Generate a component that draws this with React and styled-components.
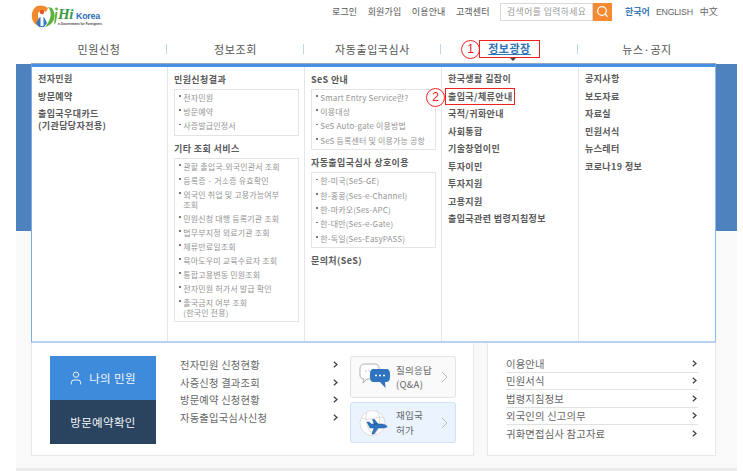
import React from "react";
import styled, { createGlobalStyle } from "styled-components";
import { Search, User } from "lucide-react";

const Global = createGlobalStyle`
  html, body { margin: 0; padding: 0; background: #fff; }
  body { font-family: "Noto Sans CJK KR", "Noto Sans", sans-serif; color: #555; width: 743px; height: 471px; overflow: hidden; }
  * { box-sizing: border-box; }
`;

const Page = styled.div`width: 743px; height: 471px; display: flex; flex-direction: column;`;

const TopBar = styled.header`height: 37px; display: flex; align-items: flex-start; padding-left: 31px;`;
const LogoWrap = styled.div`display: flex; width: 301px; padding-top: 5px; align-items: flex-start;`;
const LogoText = styled.div`display: flex; flex-direction: column; margin-left: -2px; line-height: 1;`;
const LogoTop = styled.div`display: flex; align-items: baseline; height: 18px; padding-top: 1px;`;
const Hi = styled.span`font-family: "Liberation Serif", serif; font-style: italic; font-weight: 700; font-size: 15px; color: #3d9a4a; line-height: 17px; width: 18px; letter-spacing: -0.5px;`;
const Korea = styled.span`font-family: "Liberation Sans", sans-serif; font-weight: 700; font-size: 8.8px; color: #2a6cb5; letter-spacing: -0.2px;`;
const LogoSub = styled.span`font-family: "Liberation Sans", sans-serif; font-size: 3.2px; font-weight: 700; color: #444; white-space: nowrap;`;

const Utility = styled.nav`display: flex; align-items: center; height: 22px; padding-top: 1px;`;
const UtilLink = styled.a`font-size: 9px; color: #555; letter-spacing: 0.15px; margin-right: 10.4px; white-space: nowrap; line-height: 14px;`;
const SearchBox = styled.div`display: flex; height: 18px; width: 112px; margin-right: 13px;`;
const SearchField = styled.div`flex: 1; border: 1px solid #d8d8d8; font-size: 8.8px; color: #999; letter-spacing: 0.45px; line-height: 15px; padding-left: 6px; white-space: nowrap; overflow: hidden;`;
const SearchBtn = styled.div`width: 19px; background: #f58a33; color: #fff; display: flex; align-items: center; justify-content: center;`;
const LangLink = styled.a`font-size: ${p => p.$latin ? "8.8px" : "9px"}; letter-spacing: ${p => p.$latin ? "-0.25px" : "0"}; color: ${p => p.$on ? "#3a7ab8" : "#666"}; font-weight: ${p => p.$on ? 700 : 400}; margin-right: ${p => p.$gap}px; white-space: nowrap; line-height: 14px; font-family: ${p => p.$latin ? '"Liberation Sans", sans-serif' : 'inherit'};`;

const MainNav = styled.nav`height: 27px; margin-left: 31px; width: 685px; display: grid; grid-template-columns: 136px 137px 137px 137px 138px; padding-bottom: 4px;`;
const NavItem = styled.div`position: relative; display: flex; align-items: center; justify-content: center; font-size: 11px; letter-spacing: 0.6px; color: #555; &:not(:last-child)::after { content: ""; position: absolute; right: 0; top: 7px; height: 10px; width: 1px; background: #bcd6e4; }`;
const NavActive = styled.span`position: relative; font-weight: 700; color: #2f74b5; text-decoration: underline; border: 1px solid #ee2222; height: 18px; width: 61px; text-align: center; line-height: 15px; letter-spacing: 0.5px;`;
const Caret = styled.i`position: absolute; left: 30px; bottom: -4px; width: 0; height: 0; border: 3px solid transparent; border-top: 3px solid #444; border-bottom: 0;`;
const NumberMark = styled.span`position: absolute; width: 19px; height: 19px; border: 1px solid #ee2222; border-radius: 50%; color: #e22; font-size: 12px; line-height: 17px; text-align: center; font-weight: 400; letter-spacing: 0; background: #fff; font-family: "Liberation Sans", sans-serif; left: ${p => p.$left}px; top: ${p => p.$top}px;`;

const Stage = styled.main`margin-left: 16px; width: 721px; height: 404px; padding: 0 21px 0 15px; background: linear-gradient(#4d82bf 0 167px, #f9f9f9 167px);`;
const Panel = styled.section`height: 279px; background: #fff; border-top: 3px solid #4a90e2; border-left: 1px solid #7fabe0; border-right: 1px solid #8fb8ea; border-bottom: 2px solid #b9d0ee; display: grid; grid-template-columns: 136px 137px 137px 137px 136px; box-shadow: 0 -1px 0 #8fa6bf;`;
const Column = styled.div`padding: 3.5px 5px 0 6px; &:not(:last-child) { border-right: 1px solid #e6e6e6; }`;
const Head = styled.div`font-size: 9px; font-weight: 700; color: #5a5a5a; line-height: 18px; height: 18px; white-space: nowrap; letter-spacing: 0.4px; margin-top: ${p => p.$top || 0}px;`;
const TopLink = styled.a`position: relative; display: block; font-size: 9px; font-weight: 700; color: #5a5a5a; line-height: 12px; padding: 2.75px 0; letter-spacing: 0.4px; white-space: nowrap;`;
const RedMark = styled.span`position: absolute; left: -3px; top: 0; width: 70px; height: 17px; border: 1px solid #ee2222;`;
const SubBox = styled.ul`list-style: none; margin: 0; padding: 1px 4px; border: 1px solid #e4e4e4; width: 125px;`;
const SubItem = styled.li`display: flex; font-size: 8px; color: #949494; line-height: 10.2px; padding: ${p => p.$tight ? 1.9 : 2.1}px 0; letter-spacing: 0.15px; white-space: nowrap; &::before { content: ""; width: 1.5px; height: 1.5px; margin: 2.5px 2.8px 0 0; flex: none; background: #777; }`;

const Bottom = styled.div`display: flex; gap: 13px; align-items: stretch; height: 113px;`;
const BoxLeft = styled.section`width: 443px; background: #fff; border: 1px solid #e8e8e8; border-top: 0; padding: 13px 0 0 18px; display: flex;`;
const TileStack = styled.div`width: 106px; display: flex; flex-direction: column;`;
const Tile = styled.a`height: 44px; background: ${p => p.$dark ? "#2a435f" : "#3f8bdb"}; color: #f2f6fb; font-size: 11.5px; letter-spacing: 0.35px; display: flex; align-items: center; justify-content: center; gap: 5px; padding-right: ${p => p.$dark ? 0 : 2}px;`;
const CheckList = styled.ul`list-style: none; margin: 0 9px 0 24px; padding: 0; width: 161px;`;
const CheckRow = styled.li`display: flex; justify-content: space-between; align-items: center; height: 17.5px; font-size: 10.3px; color: #666; letter-spacing: 0.2px; padding-right: 3px;`;
const CardStack = styled.div`width: 106px; display: flex; flex-direction: column; gap: 4px;`;
const Card = styled.a`height: ${p => p.$h}px; border: 1px solid ${p => p.$blue ? "#cfe2f7" : "#e3e3e3"}; background: ${p => p.$blue ? "#eaf3fe" : "#fafafa"}; border-radius: 3px; display: flex; align-items: center; padding-left: 8px;`;
const CardLabel = styled.div`width: 45px; margin-left: 4px; font-size: 9.5px; line-height: 14.5px; color: #666; letter-spacing: 0.3px; white-space: nowrap;`;
const BoxRight = styled.aside`width: 229px; background: #fff; border: 1px solid #e8e8e8; border-top: 0; padding: 12px 0 0 18px;`;
const InfoRow = styled.li`display: flex; justify-content: space-between; align-items: center; height: 17.5px; font-size: 10.3px; color: #666; letter-spacing: 0.2px; padding-right: 1px; &:not(:last-child) { border-bottom: 1px solid #e2e2e2; }`;
const InfoList = styled.ul`list-style: none; margin: 0; padding: 0; width: 192px;`;
const Strip = styled.div`margin-left: 16px; width: 721px; flex: 1; background: #ebebeb;`;

const Chevron = () => (
  <svg width="5" height="7" viewBox="0 0 5 7"><path d="M0.8 0.7 L4 3.5 L0.8 6.3" fill="none" stroke="#444" strokeWidth="1.3" /></svg>
);
const CardChevron = () => (
  <svg width="7" height="12" viewBox="0 0 7 12"><path d="M1 1 L6 6 L1 11" fill="none" stroke="#bbb" strokeWidth="1" /></svg>
);

const LogoMark = () => (
  <svg width="29" height="23" viewBox="0 0 29 23">
    <path d="M6 1 C1 4 0 10 1.5 15 C2.5 18 5 20 7 21 L10 18 L7 12 L7 8 L11 5 L15 7 L17 3 C13 0 9 0 6 1Z" fill="#f08a2c" />
    <circle cx="11" cy="7" r="2.2" fill="#e8532b" />
    <path d="M5 18 L9 12 L13 12 L16 18 L13 22 L8 22Z" fill="#3478c4" />
    <path d="M9.5 11 L12.5 11 L12.5 21 L9.5 21Z" fill="#fff" />
    <path d="M17 2 C21 6 21 14 14 22 C22 20 27 12 21 3Z" fill="#5db13f" />
    <circle cx="25.5" cy="4" r="1.4" fill="#5db13f" />
    <path d="M24.5 7 L26.5 7 L25 17 L23 20Z" fill="#5db13f" />
  </svg>
);

const ChatIcon = () => (
  <svg width="33" height="28" viewBox="0 0 33 28">
    <path d="M5 1 H16 C19 1 20 3 20 5 V12 C20 15 18 16 16 16 H8 L4 20 L5 16 C2 16 1 14 1 12 V5 C1 3 3 1 5 1Z" fill="#fff" stroke="#aaa" strokeWidth="0.9" />
    <circle cx="7" cy="8" r="0.7" fill="#bbb" /><circle cx="10" cy="8" r="0.7" fill="#bbb" />
    <path d="M15 6 H27 C30 6 31 8 31 11 V14 C31 18 29 19 27 19 H26 L26.5 25 L21 19 H15 C12 19 11 17 11 14 V11 C11 8 12 6 15 6Z" fill="#2f74c0" />
    <circle cx="17" cy="12.5" r="1" fill="#fff" /><circle cx="21" cy="12.5" r="1" fill="#fff" /><circle cx="25" cy="12.5" r="1" fill="#fff" />
  </svg>
);

const PlaneIcon = () => (
  <svg width="33" height="28" viewBox="0 0 33 28">
    <circle cx="13.5" cy="14" r="12.5" fill="#fff" stroke="#ddd" strokeWidth="1" />
    <path d="M3 9 C10 12 17 8 24 8 M8 3 C5 12 9 20 14 26 M19 3 C23 11 19 20 16 26" fill="none" stroke="#ddd" strokeWidth="1" />
    <path d="M8 13 L10 13 L12.5 15 H22 C25 15 28 16.5 28 17.5 C28 18.5 25 19 22 19 H19 L15 25 H13 L15 19 H11 L8 13Z M15 15 L13.5 10.5 H15.5 L19 15Z" fill="#2f74c0" stroke="#1d4e86" strokeWidth="0.5" />
  </svg>
);

const Items = ({ list, tight }) => list.map(t => (
  <SubItem key={t} $tight={tight}>
    <span>{t.split("\n").map((l, i) => <React.Fragment key={i}>{i > 0 && <br />}{l}</React.Fragment>)}</span>
  </SubItem>
));

export default function App() {
  return (
    <Page>
      <Global />
      <TopBar>
        <LogoWrap>
          <LogoMark />
          <LogoText>
            <LogoTop><Hi>Hi</Hi><Korea>Korea</Korea></LogoTop>
            <LogoSub>e-Government for Foreigners</LogoSub>
          </LogoText>
        </LogoWrap>
        <Utility>
          <UtilLink>로그인</UtilLink>
          <UtilLink>회원가입</UtilLink>
          <UtilLink>이용안내</UtilLink>
          <UtilLink>고객센터</UtilLink>
          <SearchBox>
            <SearchField>검색어를 입력하세요</SearchField>
            <SearchBtn><Search size={13} strokeWidth={2.2} /></SearchBtn>
          </SearchBox>
          <LangLink $on $gap={6}>한국어</LangLink>
          <LangLink $latin $gap={7}>ENGLISH</LangLink>
          <LangLink $gap={0}>中文</LangLink>
        </Utility>
      </TopBar>
      <MainNav>
        <NavItem>민원신청</NavItem>
        <NavItem>정보조회</NavItem>
        <NavItem>자동출입국심사</NavItem>
        <NavItem>
          <NumberMark $left={20} $top={3}>1</NumberMark>
          <NavActive>정보광장<Caret /></NavActive>
        </NavItem>
        <NavItem>뉴스·공지</NavItem>
      </MainNav>
      <Stage>
        <Panel>
          <Column>
            <TopLink>전자민원</TopLink>
            <TopLink>방문예약</TopLink>
            <TopLink>출입국우대카드<br />(기관담당자전용)</TopLink>
          </Column>
          <Column>
            <Head>민원신청결과</Head>
            <SubBox><Items list={["전자민원", "방문예약", "사증발급인정서"]} /></SubBox>
            <Head $top={4}>기타 조회 서비스</Head>
            <SubBox><Items tight list={["관할 출입국.외국인관서 조회", "등록증 · 거소증 유효확인", "외국인 취업 및 고용가능여부\n조회", "민원신청 대행 등록기관 조회", "법무부지정 외료기관 조회", "체류만료일조회", "육아도우미 교육수료자 조회", "통합고용변동 민원조회", "전자민원 허가서 발급 확인", "출국금지 여부 조회\n(한국인 전용)"]} /></SubBox>
          </Column>
          <Column>
            <Head>SeS 안내</Head>
            <SubBox><Items list={["Smart Entry Service란?", "이용대상", "SeS Auto-gate 이용방법", "SeS 등록센터 및 이용가능 공항"]} /></SubBox>
            <Head $top={4}>자동출입국심사 상호이용</Head>
            <SubBox><Items list={["한-미국(SeS-GE)", "한-홍콩(Ses-e-Channel)", "한-마카오(Ses-APC)", "한-대만(Ses-e-Gate)", "한-독일(Ses-EasyPASS)"]} /></SubBox>
            <Head $top={4}>문의처(SeS)</Head>
          </Column>
          <Column>
            <TopLink>한국생활 길잡이</TopLink>
            <TopLink>
              <NumberMark $left={-22} $top={0}>2</NumberMark>
              <RedMark />
              출입국/체류안내
            </TopLink>
            <TopLink>국적/귀화안내</TopLink>
            <TopLink>사회통합</TopLink>
            <TopLink>기술창업이민</TopLink>
            <TopLink>투자이민</TopLink>
            <TopLink>투자지원</TopLink>
            <TopLink>고용지원</TopLink>
            <TopLink>출입국관련 법령지침정보</TopLink>
          </Column>
          <Column>
            <TopLink>공지사항</TopLink>
            <TopLink>보도자료</TopLink>
            <TopLink>자료실</TopLink>
            <TopLink>민원서식</TopLink>
            <TopLink>뉴스레터</TopLink>
            <TopLink>코로나19 정보</TopLink>
          </Column>
        </Panel>
        <Bottom>
          <BoxLeft>
            <TileStack>
              <Tile><User size={16} strokeWidth={1.5} />나의 민원</Tile>
              <Tile $dark>방문예약확인</Tile>
            </TileStack>
            <CheckList>
              {["전자민원 신청현황", "사증신청 결과조회", "방문예약 신청현황", "자동출입국심사신청"].map(t => (
                <CheckRow key={t}><span>{t}</span><Chevron /></CheckRow>
              ))}
            </CheckList>
            <CardStack>
              <Card $h={42}>
                <ChatIcon />
                <CardLabel>질의응답<br />(Q&amp;A)</CardLabel>
                <CardChevron />
              </Card>
              <Card $blue $h={41}>
                <PlaneIcon />
                <CardLabel>재입국<br />허가</CardLabel>
                <CardChevron />
              </Card>
            </CardStack>
          </BoxLeft>
          <BoxRight>
            <InfoList>
              {["이용안내", "민원서식", "법령지침정보", "외국인의 신고의무", "귀화면접심사 참고자료"].map(t => (
                <InfoRow key={t}><span>{t}</span><Chevron /></InfoRow>
              ))}
            </InfoList>
          </BoxRight>
        </Bottom>
      </Stage>
      <Strip />
    </Page>
  );
}
